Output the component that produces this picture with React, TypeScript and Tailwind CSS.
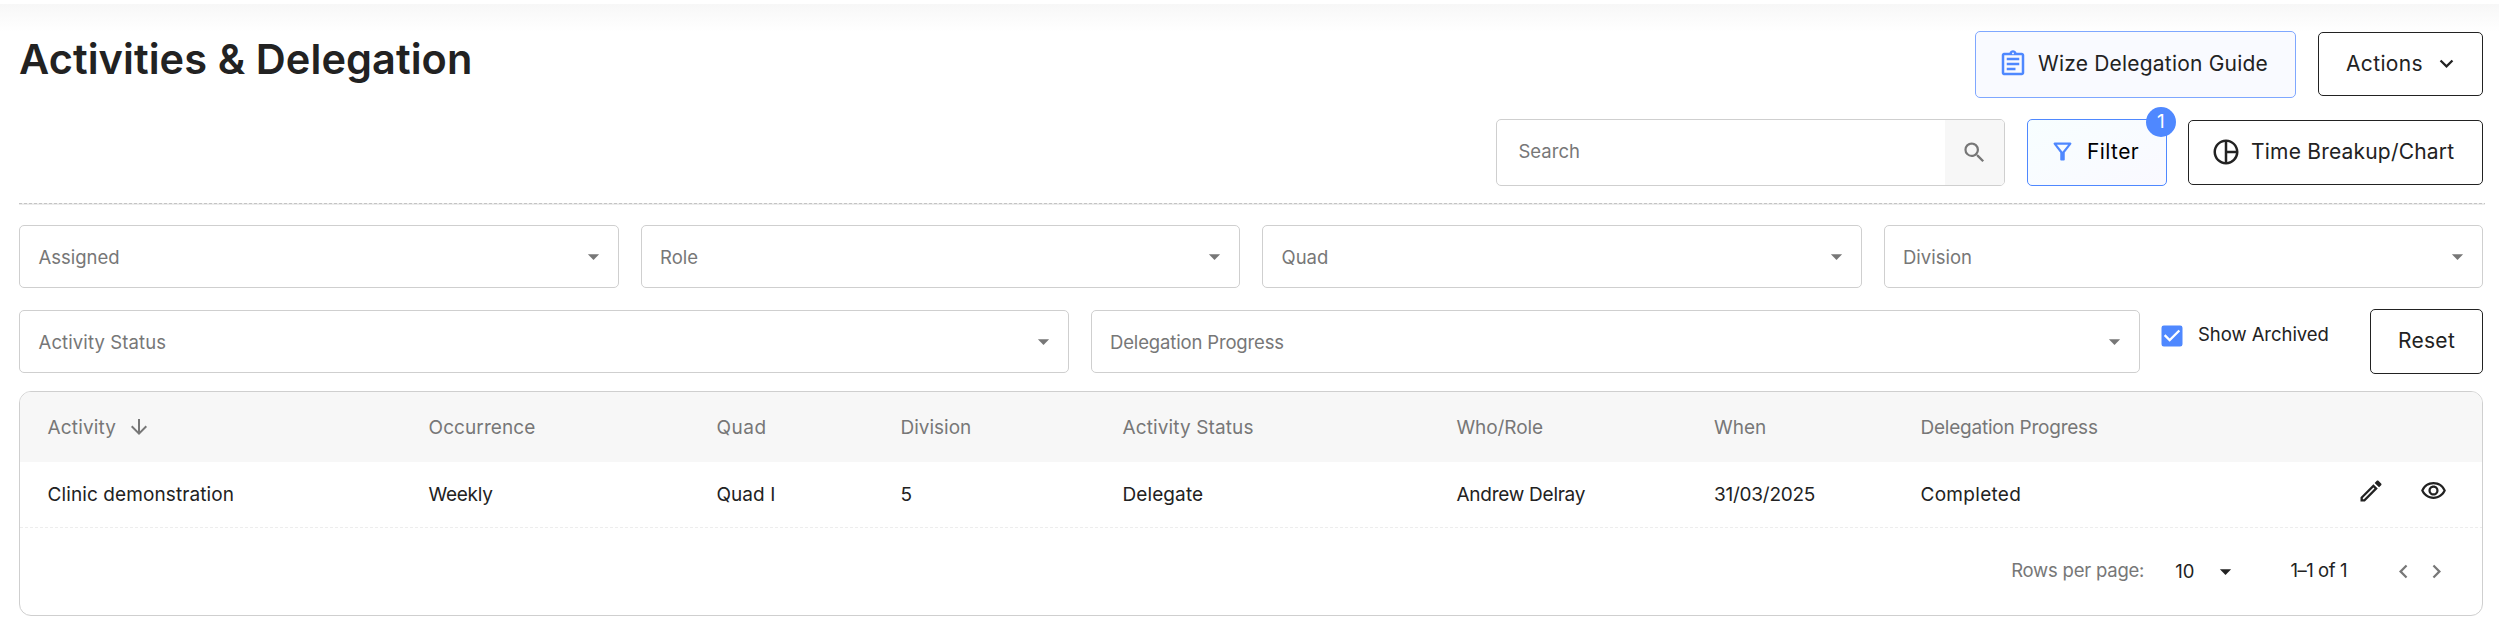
import type { ReactNode } from "react";
import {
  MdArrowDownward,
  MdArrowDropDown,
  MdCheckBox,
  MdChevronLeft,
  MdChevronRight,
  MdExpandMore,
  MdOutlineAssignment,
  MdOutlineEdit,
  MdOutlineFilterAlt,
  MdOutlinePieChart,
  MdOutlineRemoveRedEye,
  MdSearch,
} from "react-icons/md";

interface SelectProps {
  label: string;
  className?: string;
}

interface ButtonProps {
  children: ReactNode;
  className?: string;
}

type Column = {
  title: string;
  titleClass?: string;
  value: string;
  valueClass?: string;
  sorted?: boolean;
};

const columns: Column[] = [
  {
    title: "Activity",
    titleClass: "tracking-[0.15px]",
    value: "Clinic demonstration",
    valueClass: "tracking-[0.1px]",
    sorted: true,
  },
  {
    title: "Occurrence",
    titleClass: "tracking-[0.1px]",
    value: "Weekly",
    valueClass: "tracking-[-0.28px]",
  },
  {
    title: "Quad",
    titleClass: "tracking-[0.5px]",
    value: "Quad I",
    valueClass: "tracking-[0.05px]",
  },
  { title: "Division", value: "5" },
  {
    title: "Activity Status",
    titleClass: "tracking-[0.12px]",
    value: "Delegate",
    valueClass: "tracking-[0.1px]",
  },
  {
    title: "Who/Role",
    titleClass: "tracking-[-0.1px]",
    value: "Andrew Delray",
    valueClass: "tracking-[-0.26px]",
  },
  { title: "When", value: "31/03/2025", valueClass: "tracking-[-0.25px]" },
  {
    title: "Delegation Progress",
    titleClass: "tracking-[-0.23px]",
    value: "Completed",
    valueClass: "tracking-[0.3px]",
  },
];

const gridCols =
  "grid grid-cols-[381px_288px_184px_222px_334px_257.5px_206.5px_1fr_auto] items-center pl-[27.5px]";

const Select = ({ label, className = "" }: SelectProps) => {
  return (
    <div className="flex h-[63px] min-w-0 flex-1 items-center justify-between rounded-[5px] border border-[#cfcfcf] bg-white pl-[18.5px] pr-[11px] text-[#777777]">
      <span className={`pt-0.5 text-[18.5px] ${className}`}>{label}</span>
      <MdArrowDropDown size={27} />
    </div>
  );
};

const Button = ({ children, className = "" }: ButtonProps) => {
  return (
    <button
      className={`flex items-center whitespace-nowrap rounded-[5px] border text-[21px] leading-7 ${className}`}
    >
      {children}
    </button>
  );
};

const Header = () => {
  return (
    <header className="flex justify-between pt-[27px]">
      <h1 className="pt-1 text-[41.5px] font-semibold leading-12 tracking-[0.08px]">
        Activities & Delegation
      </h1>
      <div className="flex flex-col items-end gap-[21px]">
        <div className="flex gap-[22px]">
          <Button className="h-[67px] w-[321px] border-[#7fa7ff] bg-[#f9faff] pb-0.5 pl-[22px] tracking-[0.2px]">
            <MdOutlineAssignment size={30} className="mr-2.5 text-[#4f88ff]" />
            Wize Delegation Guide
          </Button>
          <Button className="mt-px h-16 w-[165px] border-[#222222] bg-white pb-px pl-[27px] tracking-[0.35px]">
            Actions
            <MdExpandMore size={27} className="ml-2.5" />
          </Button>
        </div>
        <div className="flex items-center">
          <div className="flex h-[67px] w-[509px] overflow-hidden rounded-[5px] border border-[#cfcfcf] bg-white text-[#777777]">
            <span className="flex flex-1 items-center pb-0.5 pl-[21.5px] text-[18.5px]">
              Search
            </span>
            <span className="flex w-[59px] items-center bg-[#f7f7f7] pb-px pl-4">
              <MdSearch size={27} />
            </span>
          </div>
          <Button className="relative ml-[22px] h-[67px] w-[140px] border-[#4f88ff] bg-linear-to-br from-[#f7feff] to-[#faf9ff] pb-0.5 pl-[21px] tracking-[0.4px] text-black">
            <MdOutlineFilterAlt size={27} className="mr-[11px] text-[#4f88ff]" />
            Filter
            <span className="absolute -right-2.5 -top-[13px] flex size-[30px] items-center justify-center rounded-full bg-[#4f88ff] text-[19px] text-white">
              1
            </span>
          </Button>
          <Button className="ml-[21px] h-[65px] w-[295px] border-[#222222] bg-white pb-px pl-[22px] tracking-[0.2px]">
            <MdOutlinePieChart size={30} className="mr-2.5" />
            Time Breakup/Chart
          </Button>
        </div>
      </div>
    </header>
  );
};

const Filters = () => {
  return (
    <section className="mt-5">
      <div className="flex gap-[22px]">
        <Select label="Assigned" />
        <Select label="Role" />
        <Select label="Quad" />
        <Select label="Division" />
      </div>
      <div className="mt-[21px] flex items-center">
        <div className="flex flex-1 gap-[22px]">
          <Select label="Activity Status" className="tracking-[0.12px]" />
          <Select label="Delegation Progress" className="tracking-[-0.15px]" />
        </div>
        <label className="ml-[18px] flex w-[212px] items-center gap-3 pb-3 text-[18.5px] tracking-[-0.05px]">
          <MdCheckBox size={28} className="text-[#4f88ff]" />
          <span className="-mt-0.5">Show Archived</span>
        </label>
        <Button className="h-[65px] w-[113px] justify-center border-[#222222] bg-white pb-px tracking-[0.3px]">
          Reset
        </Button>
      </div>
    </section>
  );
};

const ActivityTable = () => {
  return (
    <section className="mt-[17px] h-[225px] overflow-hidden rounded-xl border border-[#cfcfcf] bg-white text-[19px]">
      <div className={`${gridCols} h-[70px] bg-[#f7f7f7] text-[#777777]`}>
        {columns.map((col) => (
          <div key={col.title} className="flex items-center">
            <span className={`pt-[3px] ${col.titleClass ?? ""}`}>
              {col.title}
            </span>
            {col.sorted && <MdArrowDownward size={24} className="ml-[11px]" />}
          </div>
        ))}
      </div>
      <div className={`${gridCols} h-[65px]`}>
        {columns.map((col) => (
          <div key={col.title} className={`pt-0.5 ${col.valueClass ?? ""}`}>
            {col.value}
          </div>
        ))}
        <div className="flex items-center pb-2 pr-[35px]">
          <MdOutlineEdit size={28} />
          <MdOutlineRemoveRedEye size={27} className="ml-[35px]" />
        </div>
      </div>
      <div className="h-px bg-[repeating-linear-gradient(90deg,#ededed_0_3px,#ffffff_3px_5px)]" />
      <div className="flex h-[86px] items-center justify-end pr-8 text-[18.5px]">
        <span className="tracking-[-0.22px] text-[#777777]">
          Rows per page:
        </span>
        <span className="ml-[31px] pt-px">10</span>
        <MdArrowDropDown size={27} className="ml-[18px]" />
        <span className="ml-[51px] tracking-[-0.45px]">1–1 of 1</span>
        <MdChevronLeft size={27} className="ml-[43px] text-[#777777]" />
        <MdChevronRight size={27} className="ml-1.5 text-[#777777]" />
      </div>
    </section>
  );
};

export default function App() {
  return (
    <div className="h-[637px] w-full bg-white pt-1 font-['Inter',sans-serif] text-[#222222]">
      <main className="bg-[linear-gradient(#f7f7f7,#ffffff_28px)] pl-[19px] pr-4">
        <Header />
        <div className="-mr-0.5 mt-[17px] h-0.5 border-b border-[#ebebeb] bg-[repeating-linear-gradient(90deg,#c4c4c4_0_3px,#ededed_3px_5px)]" />
        <Filters />
        <ActivityTable />
      </main>
    </div>
  );
}
